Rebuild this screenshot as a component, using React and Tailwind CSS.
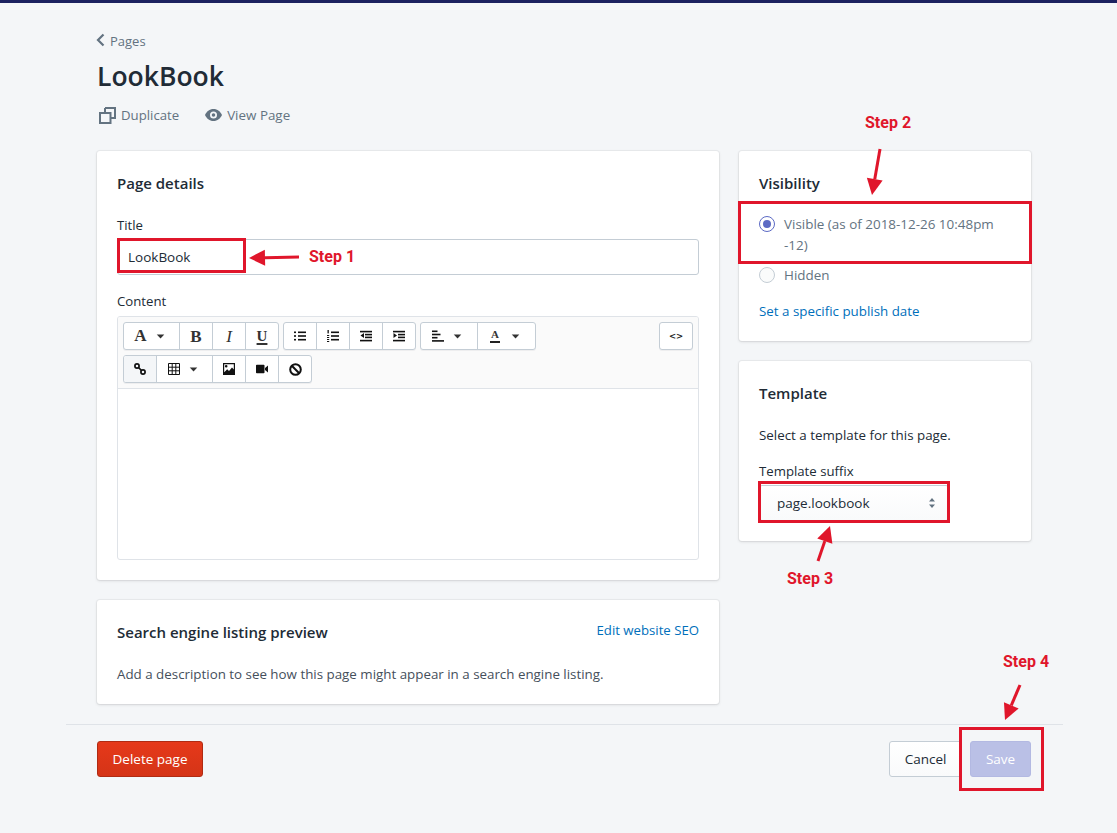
import React from "react";

const Caret = ({ m = "ml-[9px]" }) => (
  <svg width="9" height="5" viewBox="0 0 10 6" className={m}><path d="M0.500 0.500h9L5 5.500z" fill="#333" /></svg>
);

const Ico = ({ children }) => (
  <svg width="12" height="12" viewBox="0 0 12 12" fill="#111">{children}</svg>
);

const Rows = ({ rows }) => rows.map(([x, y, w, h = 1.6], i) => <rect key={i} x={x} y={y} width={w} height={h} />);

const UlIcon = () => <Ico><Rows rows={[[0, 1.500, 2], [4, 1.500, 8], [0, 5.200, 2], [4, 5.200, 8], [0, 8.900, 2], [4, 8.900, 8]]} /></Ico>;
const OlIcon = () => <Ico><Rows rows={[[0.500, 0, 1.300, 3.400], [0, 5, 2.200, 1], [0, 7, 2.200, 1], [0, 9, 2.200, 1], [0, 11, 2.200, 1], [4, 1.500, 8], [4, 5.200, 8], [4, 8.900, 8]]} /></Ico>;
const OutIcon = () => <Ico><Rows rows={[[0, 0.800, 12], [5, 3.800, 7], [5, 6.600, 7], [0, 9.800, 12]]} /><path d="M0.500 5.500L4 3v5z" /></Ico>;
const InIcon = () => <Ico><Rows rows={[[0, 0.800, 12], [5, 3.800, 7], [5, 6.600, 7], [0, 9.800, 12]]} /><path d="M4 5.500L0.500 3v5z" /></Ico>;
const AlignIcon = () => <Ico><Rows rows={[[0, 0.500, 5.500], [0, 3.700, 8.500], [0, 6.900, 5.500], [0, 10.100, 12]]} /></Ico>;
const LinkIcon = () => (
  <svg width="12" height="12" viewBox="0 0 12 12" fill="none" stroke="#111" strokeWidth="1.700">
    <circle cx="3" cy="3" r="2.100" /><circle cx="9" cy="9" r="2.100" /><path d="M4.500 4.500l3 3" />
  </svg>
);
const TableIcon = () => (
  <svg width="12" height="12" viewBox="0 0 12 12" fill="none" stroke="#111" strokeWidth="1">
    <path d="M0.500 0.500h11v11h-11zM0.500 4.200h11M0.500 7.800h11M4.200 0.500v11M7.800 0.500v11" />
  </svg>
);
const ImageIcon = () => <Ico><path fillRule="evenodd" d="M0 0h12v12H0zM1.200 1.200v8l3-3 1.800 1.800 3-3.500 1.800 2V1.200zM3.200 2a1.300 1.300 0 1 0 0 2.600 1.300 1.300 0 0 0 0-2.600z" /></Ico>;
const VideoIcon = () => <Ico><path d="M0 2.500a.8.8 0 0 1 .8-.8h6.900a.8.8 0 0 1 .8.800v7a.8.8 0 0 1-.8.800H.8a.8.8 0 0 1-.8-.8zM9 5l3-2.500v7L9 7z" /></Ico>;
const BanIcon = () => (
  <svg width="13" height="13" viewBox="0 0 13 13" fill="none" stroke="#111" strokeWidth="2">
    <circle cx="6.500" cy="6.500" r="5.300" /><path d="M2.800 2.800l7.400 7.400" />
  </svg>
);

const serif = { fontFamily: "'Liberation Serif', serif" };
const G = ({ className, children }) => <span className={`text-[#333] leading-none ${className}`} style={serif}>{children}</span>;

function Btn({ w, active, last, children }) {
  return (
    <div className={`h-full flex items-center justify-center ${w} ${last ? "" : "border-r border-[#c4cdd5]"} ${active ? "bg-[#f4f6f8]" : ""}`}>
      {children}
    </div>
  );
}

function Group({ children }) {
  return <div className="flex h-[28px] bg-white border border-[#c4cdd5] rounded-[3px] shadow-[0_1px_0_rgba(22,29,37,0.05)] overflow-hidden">{children}</div>;
}

function Card({ className, children }) {
  return <section className={`bg-white rounded-[3px] shadow-[0_0_0_1px_rgba(63,63,68,0.05),0_1px_3px_0_rgba(63,63,68,0.15)] ${className}`}>{children}</section>;
}

function Step({ className, children }) {
  return <div className={`absolute text-[#e0162b] font-bold text-[16px] leading-[20px] whitespace-nowrap ${className}`} style={{ fontFamily: "Roboto, sans-serif" }}>{children}</div>;
}

function Arrow({ x1, y1, x2, y2 }) {
  const a = Math.atan2(y2 - y1, x2 - x1);
  const L = 16, W = 8;
  const bx = x2 - L * Math.cos(a), by = y2 - L * Math.sin(a);
  const px = -Math.sin(a) * W, py = Math.cos(a) * W;
  return (
    <g>
      <line x1={x1} y1={y1} x2={bx} y2={by} stroke="#e0162b" strokeWidth="3" />
      <polygon points={`${x2},${y2} ${bx + px},${by + py} ${bx - px},${by - py}`} fill="#e0162b" />
    </g>
  );
}

function Highlight({ className }) {
  return <div className={`absolute border-[3px] border-[#e0162b] ${className}`} />;
}

export default function App() {
  return (
    <div className="relative min-h-[833px] bg-[#f4f6f8] text-[14px] leading-[20px] text-[#212b36] overflow-hidden" style={{ fontFamily: "'Open Sans', 'Noto Sans', sans-serif" }}>
      <div className="h-[3px] bg-[#1c2260]" />
      <div className="w-[997px] ml-[66px]">
        <header className="pl-[31px] pr-[32px] pt-[28px] h-[148px]">
          <div className="flex items-center h-[20px] text-[#637381] text-[13px]">
            <svg width="9" height="14" viewBox="0 0 9 14" className="-ml-[1px] mr-[5px] -mt-[3px]"><path d="M7.500 1.500L2 7l5.500 5.500" fill="none" stroke="#637381" strokeWidth="2.200" /></svg>
            Pages
          </div>
          <h1 className="text-[26.500px] leading-[32px] font-semibold mt-[9px] text-[#212b36]">LookBook</h1>
          <div className="flex items-center mt-[13px] text-[#637381] text-[13.200px]">
            <svg width="17" height="17" viewBox="0 0 17 17" className="ml-[2px] mr-[5px]"><path d="M6 1h10v10h-4M1 6h10.500v10H1z" fill="none" stroke="#637381" strokeWidth="2" /><path d="M6 1v4" stroke="#637381" strokeWidth="2" /></svg>
            Duplicate
            <svg width="17" height="12" viewBox="0 0 17 12" className="ml-[26px] mr-[5px]"><path fillRule="evenodd" d="M8.500 0C4.500 0 1.500 2.600 0 6c1.500 3.400 4.500 6 8.500 6s7-2.600 8.500-6c-1.500-3.400-4.500-6-8.500-6zm0 9.500a3.500 3.500 0 1 1 0-7 3.500 3.500 0 0 1 0 7zm0-1.700a1.800 1.800 0 1 0 0-3.600 1.800 1.800 0 0 0 0 3.600z" fill="#637381" /></svg>
            <span className="text-[13.400px]">View Page</span>
          </div>
        </header>

        <div className="flex gap-[20px] pl-[31px] pr-[32px] items-start">
          <div className="w-[622px] flex flex-col gap-[20px]">
            <Card className="h-[429px] p-[20px]">
              <h2 className="text-[15px] leading-[24px] font-semibold">Page details</h2>
              <label className="block mt-[20px] text-[13.200px] leading-[20px]">Title</label>
              <div className="mt-[4px] h-[36px] border border-[#c4cdd5] rounded-[3px] flex items-center px-[10px] text-[13.500px]">LookBook</div>
              <label className="block mt-[16px] text-[13.200px] leading-[20px]">Content</label>
              <div className="mt-[5px] h-[244px] border border-[#dfe3e8] rounded-[3px] overflow-hidden">
                <div className="h-[72px] bg-[#fafafa] border-b border-[#dfe3e8] px-[5px] pt-[5px]">
                  <div className="flex gap-[4px]">
                    <Group>
                      <Btn w="w-[56px] pr-[4px]"><G className="text-[17px] font-bold -mt-[1px]">A</G><Caret /></Btn>
                      <Btn w="w-[33px]"><G className="text-[17px] font-bold">B</G></Btn>
                      <Btn w="w-[33px]"><G className="text-[17px] italic">I</G></Btn>
                      <Btn w="w-[32px]" last><G className="text-[15px] font-bold underline underline-offset-2 decoration-2">U</G></Btn>
                    </Group>
                    <Group>
                      <Btn w="w-[33px]"><UlIcon /></Btn>
                      <Btn w="w-[33px]"><OlIcon /></Btn>
                      <Btn w="w-[33px]"><OutIcon /></Btn>
                      <Btn w="w-[32px]" last><InIcon /></Btn>
                    </Group>
                    <Group>
                      <Btn w="w-[57px] pr-[5px]"><AlignIcon /><Caret /></Btn>
                      <Btn w="w-[57px] pr-[3px]" last><span className="flex flex-col items-center"><G className="text-[11px] font-bold">A</G><span className="w-[10px] h-[1.500px] bg-[#222] mt-[1px]" /></span><Caret m="ml-[11px]" /></Btn>
                    </Group>
                    <div className="ml-auto">
                      <Group><Btn w="w-[32px]" last><span className="text-[8.500px] font-bold text-[#222]" style={{ fontFamily: "'DejaVu Sans', sans-serif" }}>&lt;&gt;</span></Btn></Group>
                    </div>
                  </div>
                  <div className="flex mt-[5px]">
                    <Group>
                      <Btn w="w-[33px]" active><LinkIcon /></Btn>
                      <Btn w="w-[56px] pr-[4px]"><TableIcon /><Caret /></Btn>
                      <Btn w="w-[33px]"><ImageIcon /></Btn>
                      <Btn w="w-[33px]"><VideoIcon /></Btn>
                      <Btn w="w-[32px]" last><BanIcon /></Btn>
                    </Group>
                  </div>
                </div>
              </div>
            </Card>

            <Card className="h-[104px] px-[20px] pt-[20px]">
              <div className="flex justify-between items-start">
                <h2 className="text-[15px] leading-[24px] font-semibold">Search engine listing preview</h2>
                <a className="text-[#006fbb] text-[13.200px] leading-[20px]">Edit website SEO</a>
              </div>
              <p className="mt-[20px] text-[13.350px] leading-[20px] text-[#454f5b]">Add a description to see how this page might appear in a search engine listing.</p>
            </Card>
          </div>

          <div className="w-[292px] flex flex-col gap-[20px]">
            <Card className="h-[190px] px-[20px] pt-[20px]">
              <h2 className="text-[15px] leading-[24px] font-semibold">Visibility</h2>
              <div className="flex mt-[19px] text-[#637381] text-[13.450px]">
                <span className="w-[16px] h-[16px] mt-[2px] mr-[9px] shrink-0 rounded-full border-[1.500px] border-[#5c6ac4] flex items-center justify-center"><span className="w-[8px] h-[8px] rounded-full bg-[#5c6ac4]" /></span>
                <span className="leading-[21px]">Visible (as of 2018-12-26 10:48pm -12)</span>
              </div>
              <div className="flex mt-[9px] text-[#637381] text-[13.450px]">
                <span className="w-[16px] h-[16px] mt-[2px] mr-[9px] shrink-0 rounded-full border border-[#c4cdd5] bg-[#fafbfb]" />
                Hidden
              </div>
              <a className="block mt-[16px] text-[#006fbb] text-[13.350px]">Set a specific publish date</a>
            </Card>
            <Card className="h-[180px] px-[20px] pt-[20px]">
              <h2 className="text-[15px] leading-[24px] font-semibold">Template</h2>
              <p className="mt-[20px] text-[13.350px] leading-[20px]">Select a template for this page.</p>
              <label className="block mt-[16px] text-[13.200px] leading-[20px]">Template suffix</label>
              <div className="mt-[4px] w-[190px] h-[36px] border border-[#c4cdd5] rounded-[3px] bg-gradient-to-b from-white to-[#f9fafb] flex items-center justify-between pl-[17px] pr-[12px] text-[13.500px]">
                page.lookbook
                <svg width="8" height="12" viewBox="0 0 8 12"><path d="M4 1l3 3.500H1zM4 11l3-3.500H1z" fill="#637381" /></svg>
              </div>
            </Card>
          </div>
        </div>

        <footer className="mt-[20px] border-t border-[#dfe3e8] pl-[31px] pr-[32px] pt-[16px] flex justify-between items-start">
          <button className="w-[106px] h-[36px] rounded-[3px] text-white text-[13.500px] border border-[#b02b13] bg-gradient-to-b from-[#e6391a] to-[#d53417]">Delete page</button>
          <div className="flex gap-[8px]">
            <button className="w-[73px] h-[36px] rounded-[3px] text-[13.500px] border border-[#c4cdd5] bg-gradient-to-b from-white to-[#f9fafb] text-[#212b36]">Cancel</button>
            <button className="w-[61px] h-[36px] rounded-[3px] text-[13.500px] border border-[#b3b9e2] bg-[#bac0e6] text-white">Save</button>
          </div>
        </footer>
      </div>

      <Highlight className="left-[117px] top-[238px] w-[129px] h-[35px]" />
      <Highlight className="left-[738px] top-[201px] w-[294px] h-[63px]" />
      <Highlight className="left-[758px] top-[481px] w-[192px] h-[42px]" />
      <Highlight className="left-[959px] top-[727px] w-[85px] h-[64px]" />

      <Step className="left-[309px] top-[247px]">Step 1</Step>
      <Step className="left-[865px] top-[113px]">Step 2</Step>
      <Step className="left-[787px] top-[569px]">Step 3</Step>
      <Step className="left-[1003px] top-[652px]">Step 4</Step>

      <svg className="absolute left-0 top-0 pointer-events-none" width="1117" height="833">
        <Arrow x1={299} y1={257} x2={249} y2={258} />
        <Arrow x1={880} y1={149} x2={872} y2={195} />
        <Arrow x1={818} y1={561} x2={830} y2={526} />
        <Arrow x1={1020} y1={685} x2={1005} y2={720} />
      </svg>
    </div>
  );
}
